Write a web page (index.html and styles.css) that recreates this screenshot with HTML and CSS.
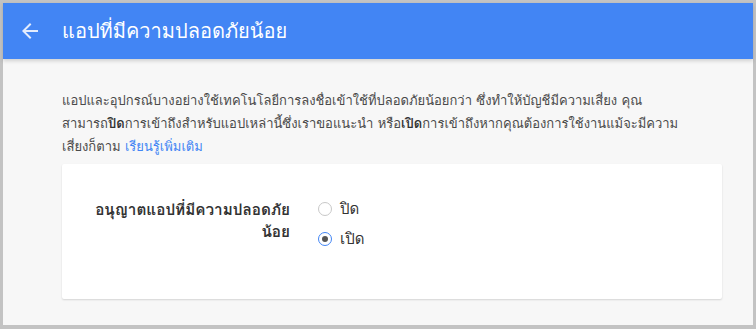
FILE: index.html
```html
<!DOCTYPE html>
<html lang="th">
<head>
  <meta charset="UTF-8">
  <meta name="viewport" content="width=device-width, initial-scale=1.0">
  <title>แอปที่มีความปลอดภัยน้อย</title>
  <link rel="stylesheet" href="styles.css">
</head>
<body>
  <div class="frame">
    <header class="topbar">
      <button class="back-btn" aria-label="กลับ">
        <svg viewBox="0 0 24 24">
          <path d="M20 11H7.83l5.59-5.59L12 4l-8 8 8 8 1.41-1.41L7.83 13H20v-2z"/>
        </svg>
      </button>
      <h1>แอปที่มีความปลอดภัยน้อย</h1>
    </header>

    <main class="content">
      <p class="intro">
        แอปและอุปกรณ์บางอย่างใช้เทคโนโลยีการลงชื่อเข้าใช้ที่ปลอดภัยน้อยกว่า ซึ่งทำให้บัญชีมีความเสี่ยง คุณ<br>สามารถ<b>ปิด</b>การเข้าถึงสำหรับแอปเหล่านี้ซึ่งเราขอแนะนำ หรือ<b>เปิด</b>การเข้าถึงหากคุณต้องการใช้งานแม้จะมีความ<br>เสี่ยงก็ตาม <a href="#">เรียนรู้เพิ่มเติม</a>
      </p>

      <section class="card">
        <div class="setting">
          <div class="setting-label">อนุญาตแอปที่มีความปลอดภัย<br>น้อย</div>
          <div class="options">
            <label class="option">
              <span class="radio"></span>
              ปิด
            </label>
            <label class="option">
              <span class="radio checked"></span>
              เปิด
            </label>
          </div>
        </div>
      </section>
    </main>
  </div>
</body>
</html>
```

FILE: styles.css
```css
html, body {
  margin: 0;
  height: 100%;
}

body {
  font-family: Tahoma, Loma, Garuda, "Noto Sans Thai", "DejaVu Sans", sans-serif;
  background: #c3c3c3;
  padding: 3px 3px 4px 3px;
  box-sizing: border-box;
}

.frame {
  background: #f7f7f7;
  height: 100%;
  display: flex;
  flex-direction: column;
}

.topbar {
  background: #4285f4;
  height: 56px;
  flex-shrink: 0;
  display: flex;
  align-items: center;
  box-shadow: 0 2px 4px rgba(0, 0, 0, 0.16);
}

.back-btn {
  width: 48px;
  height: 48px;
  margin-left: 3px;
  margin-right: 8px;
  border: none;
  background: none;
  padding: 0;
  display: flex;
  align-items: center;
  justify-content: center;
}

.back-btn svg {
  width: 24px;
  height: 24px;
  fill: #e3ecfd;
}

h1 {
  margin: 0;
  font-size: 20px;
  font-weight: normal;
  color: #fff;
}

.content {
  flex: 1;
  padding: 30px 31px 0 59px;
}

.intro {
  margin: 0 0 6px;
  font-size: 13px;
  line-height: 23px;
  color: #4a4a4a;
  white-space: nowrap;
}

.intro b {
  color: #333;
}

.intro a {
  color: #4285f4;
  text-decoration: none;
}

.card {
  background: #fff;
  border-radius: 2px;
  box-shadow: 0 1px 2px rgba(0, 0, 0, 0.14);
  padding: 34px 0 49px 28px;
}

.setting {
  display: flex;
  gap: 28px;
}

.setting-label {
  width: 200px;
  text-align: right;
  font-size: 15.3px;
  font-weight: bold;
  line-height: 22px;
  color: #333;
  padding-top: 1px;
}

.options {
  display: flex;
  flex-direction: column;
  gap: 8px;
}

.option {
  display: flex;
  align-items: center;
  gap: 8px;
  font-size: 15px;
  color: #333;
  height: 22px;
}

.radio {
  width: 12px;
  height: 12px;
  border: 1px solid #c8c8c8;
  border-radius: 50%;
  box-sizing: content-box;
  position: relative;
}

.radio.checked {
  border-color: #4285f4;
}

.radio.checked::after {
  content: "";
  position: absolute;
  left: 3px;
  top: 3px;
  width: 6px;
  height: 6px;
  border-radius: 50%;
  background: #555;
}
```
